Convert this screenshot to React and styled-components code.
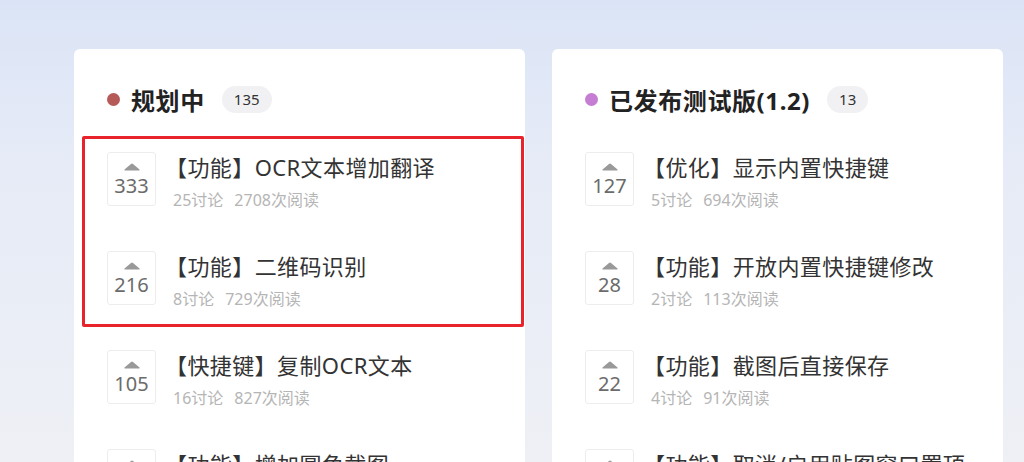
import React from 'react'
import styled, { createGlobalStyle } from 'styled-components'

const GlobalStyle = createGlobalStyle`
  html, body {
    margin: 0;
    padding: 0;
    height: 100%;
  }
  body {
    font-family: "Noto Sans", "Noto Sans CJK SC", sans-serif;
    background: linear-gradient(180deg, #dbe4f6 0%, #e6ebf7 35%, #eef0f5 100%);
    overflow: hidden;
  }
`

const columns = [
  {
    title: '规划中',
    count: 135,
    color: '#b65a57',
    highlight: 2,
    items: [
      { tag: '功能', text: 'OCR文本增加翻译', votes: 333, talks: 25, reads: 2708 },
      { tag: '功能', text: '二维码识别', votes: 216, talks: 8, reads: 729 },
      { tag: '快捷键', text: '复制OCR文本', votes: 105, talks: 16, reads: 827 },
      { tag: '功能', text: '增加圆角截图', votes: 98, talks: 12, reads: 640 },
    ],
  },
  {
    title: '已发布测试版(1.2)',
    count: 13,
    color: '#c57dd3',
    highlight: 0,
    items: [
      { tag: '优化', text: '显示内置快捷键', votes: 127, talks: 5, reads: 694 },
      { tag: '功能', text: '开放内置快捷键修改', votes: 28, talks: 2, reads: 113 },
      { tag: '功能', text: '截图后直接保存', votes: 22, talks: 4, reads: 91 },
      { tag: '功能', text: '取消/启用贴图窗口置顶', votes: 19, talks: 3, reads: 85 },
    ],
  },
]

export default function App() {
  return (
    <Page>
      <GlobalStyle />
      <Board>
        {columns.map((col) => (
          <Column key={col.title} {...col} />
        ))}
      </Board>
    </Page>
  )
}

function Column({ title, count, color, items, highlight }) {
  const marked = items.slice(0, highlight)
  const rest = items.slice(highlight)
  return (
    <Card>
      <Header>
        <Dot $color={color} />
        <Title>{title}</Title>
        <Badge>{count}</Badge>
      </Header>
      <List>
        {marked.length > 0 && (
          <Highlight>
            {marked.map((item) => <Item key={item.text} {...item} />)}
          </Highlight>
        )}
        {rest.map((item) => <Item key={item.text} {...item} />)}
      </List>
    </Card>
  )
}

function Item({ tag, text, votes, talks, reads }) {
  return (
    <Row>
      <Vote>
        <svg width="18" height="8" viewBox="0 0 18 8">
          <path d="M8 1 Q9 0 10 1 L16.5 6.5 Q17.2 7.6 16 7.6 L2 7.6 Q0.8 7.6 1.5 6.5 Z" fill="#999" />
        </svg>
        <VoteCount>{votes}</VoteCount>
      </Vote>
      <Body>
        <ItemTitle>【{tag}】{text}</ItemTitle>
        <Meta>
          <span>{talks}讨论</span>
          <span>{reads}次阅读</span>
        </Meta>
      </Body>
    </Row>
  )
}

const Page = styled.div`
  height: 462px;
  padding: 49px 0 0 74px;
  box-sizing: border-box;
`

const Board = styled.div`
  display: grid;
  grid-template-columns: 451px 451px;
  gap: 27px;
  align-items: start;
`

const Card = styled.div`
  background: #fff;
  border-radius: 6px;
  padding: 36px 24px 40px 33px;
`

const Header = styled.div`
  display: flex;
  align-items: center;
  height: 28px;
`

const Dot = styled.span`
  width: 13px;
  height: 13px;
  border-radius: 50%;
  background: ${(p) => p.$color};
  margin-right: 11px;
`

const Title = styled.h2`
  margin: 0;
  font-size: 24px;
  font-weight: 700;
  color: #222;
  letter-spacing: 0.6px;
`

const Badge = styled.span`
  margin-left: 17px;
  height: 27px;
  padding: 0 12px;
  border-radius: 14px;
  background: #f1f1f3;
  color: #333;
  font-size: 15px;
  line-height: 27px;
`

const List = styled.div`
  display: flex;
  flex-direction: column;
  gap: 39px;
  margin-top: 39px;
`

const Highlight = styled.div`
  display: flex;
  flex-direction: column;
  gap: 39px;
  border: 3px solid #e8232b;
  border-radius: 2px;
  margin: -16px -23px -16px -25px;
  padding: 13px 20px 13px 22px;
`

const Row = styled.div`
  display: flex;
  gap: 17px;
`

const Vote = styled.div`
  flex: none;
  width: 49px;
  height: 54px;
  box-sizing: border-box;
  border: 1px solid #ededed;
  border-radius: 3px;
  display: flex;
  flex-direction: column;
  align-items: center;
  padding-top: 10px;

  svg {
    display: block;
  }
`

const VoteCount = styled.div`
  font-size: 20px;
  line-height: 26px;
  color: #6b6b6b;
  margin-top: 2px;
`

const Body = styled.div`
  display: flex;
  flex-direction: column;
  margin-left: -8px;
`

const ItemTitle = styled.div`
  font-size: 22px;
  line-height: 30px;
  color: #333;
  letter-spacing: 0.4px;
  white-space: nowrap;
`

const Meta = styled.div`
  display: flex;
  gap: 11px;
  margin-top: 6px;
  padding-left: 8px;
  font-size: 16px;
  line-height: 24px;
  color: #b5b5b5;
`
